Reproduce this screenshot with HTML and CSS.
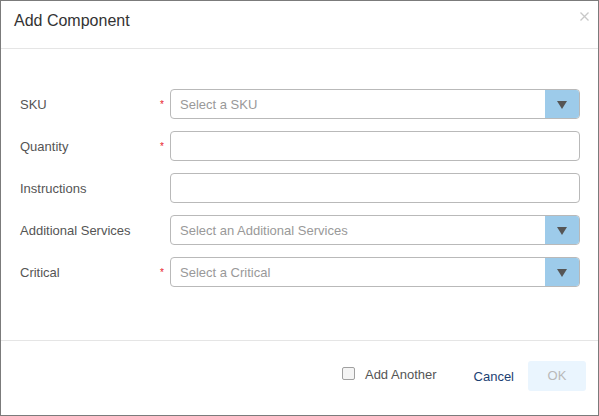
FILE: index.html
```html
<!DOCTYPE html>
<html>
<head>
<meta charset="utf-8">
<link rel="stylesheet" href="styles.css">
</head>
<body>
<div class="dialog">
  <div class="header">
    <div class="title">Add Component</div>
    <svg class="close" width="9" height="9" viewBox="0 0 9 9"><path d="M0.5 0.5L8.5 8.5M8.5 0.5L0.5 8.5" stroke="#c8c8c8" stroke-width="1.3" fill="none"/></svg>
  </div>
  <div class="body">
    <div class="row">
      <div class="label">SKU</div>
      <div class="req">*</div>
      <div class="field select"><span class="ph">Select a SKU</span><span class="btn"><span class="tri"></span></span></div>
    </div>
    <div class="row">
      <div class="label">Quantity</div>
      <div class="req">*</div>
      <div class="field"></div>
    </div>
    <div class="row">
      <div class="label">Instructions</div>
      <div class="req"></div>
      <div class="field"></div>
    </div>
    <div class="row">
      <div class="label">Additional Services</div>
      <div class="req"></div>
      <div class="field select"><span class="ph">Select an Additional Services</span><span class="btn"><span class="tri"></span></span></div>
    </div>
    <div class="row">
      <div class="label">Critical</div>
      <div class="req">*</div>
      <div class="field select"><span class="ph">Select a Critical</span><span class="btn"><span class="tri"></span></span></div>
    </div>
  </div>
  <div class="footer">
    <label class="check"><span class="box"></span><span class="check-text">Add Another</span></label>
    <div class="cancel">Cancel</div>
    <div class="ok">OK</div>
  </div>
</div>
</body>
</html>
```
FILE: styles.css
```css
html, body {
  margin: 0;
  padding: 0;
  background: #fff;
}
body {
  font-family: "Liberation Sans", Arial, sans-serif;
}
.dialog {
  width: 599px;
  height: 416px;
  box-sizing: border-box;
  border: 1px solid #7b7b7b;
  display: flex;
  flex-direction: column;
  background: #fff;
}
.header {
  box-sizing: border-box;
  border-bottom: 1px solid #e5e5e5;
  padding: 10px 9px 0 13px;
  height: 48px;
  display: flex;
  justify-content: space-between;
  align-items: flex-start;
}
.title {
  font-size: 16px;
  line-height: 20px;
  color: #333;
}
.close {
  margin-top: 1px;
}
.body {
  flex: 1;
  padding: 40px 18px 0 19px;
  display: flex;
  flex-direction: column;
  gap: 12px;
}
.row {
  display: flex;
  align-items: center;
  height: 30px;
}
.label {
  width: 140px;
  font-size: 13px;
  color: #555;
}
.req {
  width: 10px;
  color: #e8202a;
  font-size: 10px;
  line-height: 10px;
  margin-top: 2px;
}
.field {
  flex: 1;
  height: 30px;
  box-sizing: border-box;
  border: 1px solid #b9b9b9;
  border-radius: 4px;
  display: flex;
  align-items: center;
  overflow: hidden;
}
.ph {
  flex: 1;
  padding-left: 9px;
  font-size: 13px;
  color: #999;
}
.btn {
  width: 34px;
  align-self: stretch;
  background: #9dcbea;
  display: flex;
  align-items: center;
  justify-content: center;
}
.tri {
  width: 0;
  height: 0;
  border-left: 5.5px solid transparent;
  border-right: 5.5px solid transparent;
  border-top: 8px solid #555;
  margin-top: 1px;
}
.footer {
  height: 75px;
  box-sizing: border-box;
  border-top: 1px solid #e5e5e5;
  padding: 20px 12px 0 0;
  display: flex;
  justify-content: flex-end;
  align-items: flex-start;
}
.check {
  display: flex;
  align-items: center;
  height: 30px;
  margin-top: -2px;
}
.box {
  width: 11px;
  height: 11px;
  border: 1px solid #a0a0a0;
  border-radius: 2px;
  background: #f4f4f4;
  margin-top: -1px;
}
.check-text {
  margin-left: 10px;
  font-size: 13px;
  color: #555;
}
.cancel {
  margin-left: 37px;
  font-size: 13px;
  color: #1c3f73;
  height: 30px;
  line-height: 31px;
}
.ok {
  margin-left: 14px;
  width: 58px;
  height: 30px;
  border-radius: 3px;
  background: #eaf5fe;
  color: #b9b9b9;
  font-size: 13px;
  line-height: 30px;
  text-align: center;
}
```
